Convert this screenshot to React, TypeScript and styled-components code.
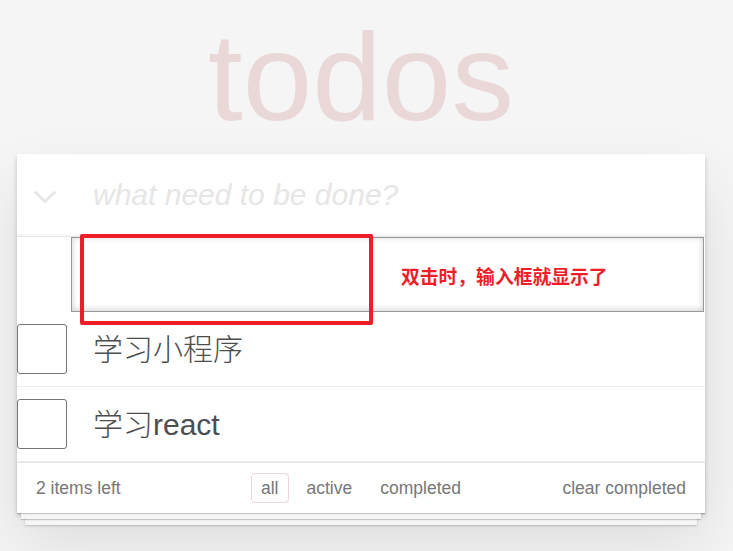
import React, { FC } from "react";
import styled, { createGlobalStyle } from "styled-components";

const GlobalStyle = createGlobalStyle`
  html, body {
    margin: 0;
    padding: 0;
  }
  body {
    background: #f5f5f5;
    font-family: "Liberation Sans", Helvetica, Arial, "Noto Sans CJK SC", sans-serif;
    color: #4d4d4d;
    -webkit-font-smoothing: antialiased;
  }
`;

interface Todo {
  id: number;
  title: string;
  editing?: boolean;
}

const todos: Todo[] = [
  { id: 0, title: "", editing: true },
  { id: 1, title: "学习小程序" },
  { id: 2, title: "学习react" },
];

const filters = ["all", "active", "completed"];

const ChevronIcon: FC = () => (
  <svg width="24" height="14" viewBox="0 0 24 14" aria-hidden>
    <polyline
      points="1.5,1.5 12,11.5 22.5,1.5"
      fill="none"
      stroke="#e6e6e6"
      strokeWidth="3"
    />
  </svg>
);

const App: FC = () => {
  return (
    <>
      <GlobalStyle />
      <Page>
        <Title>todos</Title>
        <TodoApp>
          <Header>
            <ToggleAll>
              <ChevronIcon />
            </ToggleAll>
            <NewTodo placeholder="what need to be done?" />
          </Header>
          <Main>
            <TodoList>
              {todos.map((todo) =>
                todo.editing ? (
                  <EditingItem key={todo.id}>
                    <EditInput defaultValue={todo.title} />
                    <Highlight />
                    <Note>双击时，输入框就显示了</Note>
                  </EditingItem>
                ) : (
                  <Item key={todo.id}>
                    <Toggle type="checkbox" />
                    <Label>{todo.title}</Label>
                  </Item>
                )
              )}
            </TodoList>
          </Main>
          <Footer>
            <Count>2 items left</Count>
            <Filters>
              {filters.map((f) => (
                <Filter key={f} $selected={f === "all"}>
                  {f}
                </Filter>
              ))}
            </Filters>
            <ClearButton>clear completed</ClearButton>
          </Footer>
        </TodoApp>
      </Page>
    </>
  );
};

const Page = styled.div`
  width: 688px;
  margin: 0 0 40px 17px;
`;

const Title = styled.h1`
  margin: 14px 0 15px;
  height: 125px;
  font-size: 125px;
  line-height: 125px;
  font-weight: 100;
  text-align: center;
  color: rgba(175, 47, 47, 0.15);
  font-family: "Liberation Sans", Helvetica, Arial, sans-serif;
`;

const TodoApp = styled.section`
  background: #fff;
  position: relative;
  box-shadow: 0 2.5px 5px 0 rgba(0, 0, 0, 0.2),
    0 31px 62px 0 rgba(0, 0, 0, 0.1);
`;

const Header = styled.header`
  height: 82px;
  display: flex;
  align-items: center;
  box-shadow: inset 0 -2px 1px rgba(0, 0, 0, 0.03);
`;

const ToggleAll = styled.div`
  width: 76px;
  display: flex;
  justify-content: flex-start;
  padding-left: 16px;
  box-sizing: border-box;
  margin-top: 4px;
`;

const NewTodo = styled.input`
  flex: 1;
  border: none;
  outline: none;
  background: transparent;
  font-family: "Liberation Sans", Helvetica, Arial, sans-serif;
  font-size: 30px;
  font-style: italic;
  color: #4d4d4d;
  padding: 0;

  &::placeholder {
    color: #e6e6e6;
    font-weight: 300;
  }
`;

const Main = styled.section`
  border-top: 1px solid #e6e6e6;
`;

const TodoList = styled.ul`
  margin: 0;
  padding: 0;
  list-style: none;
`;

const Item = styled.li`
  height: 74px;
  display: flex;
  align-items: center;
  border-bottom: 1px solid #ededed;
`;

const EditingItem = styled.li`
  position: relative;
  height: 75px;
  padding: 0 0 0 54px;
`;

const EditInput = styled.input`
  display: block;
  box-sizing: border-box;
  width: 633px;
  height: 75px;
  margin: 0;
  padding: 15px 20px;
  border: 1px solid #999;
  outline: none;
  font-size: 30px;
  font-family: "Liberation Sans", Helvetica, Arial, sans-serif;
  color: inherit;
  box-shadow: inset 0 -1px 6px 0 rgba(0, 0, 0, 0.2);
`;

const Highlight = styled.div`
  position: absolute;
  left: 63px;
  top: -3px;
  width: 285px;
  height: 83px;
  border: 4px solid #ef1d27;
  border-radius: 2px;
`;

const Note = styled.span`
  position: absolute;
  left: 384px;
  top: 26px;
  font-family: "Noto Sans CJK SC", sans-serif;
  font-weight: 700;
  font-size: 18.8px;
  line-height: 26px;
  color: #ef1d27;
`;

const Toggle = styled.input`
  appearance: none;
  -webkit-appearance: none;
  flex: none;
  width: 50px;
  height: 50px;
  margin: 0 26px 0 0;
  box-sizing: border-box;
  border: 1px solid #767676;
  border-radius: 3px;
  background: #fff;
`;

const Label = styled.label`
  font-family: "Liberation Sans", Helvetica, Arial, "Noto Sans CJK SC", sans-serif;
  font-size: 30px;
  font-weight: 300;
  line-height: 36px;
  color: #4d4d4d;
  padding-top: 2px;
`;

const Footer = styled.footer`
  position: relative;
  height: 50px;
  padding: 0 19px;
  display: grid;
  grid-template-columns: 1fr auto 1fr;
  align-items: center;
  color: #777;
  font-size: 17.5px;
  border-top: 1px solid #e6e6e6;

  &::before {
    content: "";
    position: absolute;
    right: 0;
    bottom: 0;
    left: 0;
    height: 50px;
    overflow: hidden;
    box-shadow: 0 1px 1px rgba(0, 0, 0, 0.2), 0 10px 0 -4px #f6f6f6,
      0 11px 1px -4px rgba(0, 0, 0, 0.2), 0 20px 0 -8px #f6f6f6,
      0 21px 2px -8px rgba(0, 0, 0, 0.2);
  }
`;

const Count = styled.span`
  position: relative;
  justify-self: start;
`;

const Filters = styled.ul`
  position: relative;
  display: flex;
  margin: 0;
  padding: 0;
  list-style: none;
`;

const Filter = styled.li<{ $selected?: boolean }>`
  margin: 0 4px;
  padding: 4px 9px;
  border: 1px solid
    ${(p) => (p.$selected ? "rgba(175, 47, 47, 0.2)" : "transparent")};
  border-radius: 4px;
  line-height: 20px;
`;

const ClearButton = styled.span`
  position: relative;
  justify-self: end;
`;

export default App;
